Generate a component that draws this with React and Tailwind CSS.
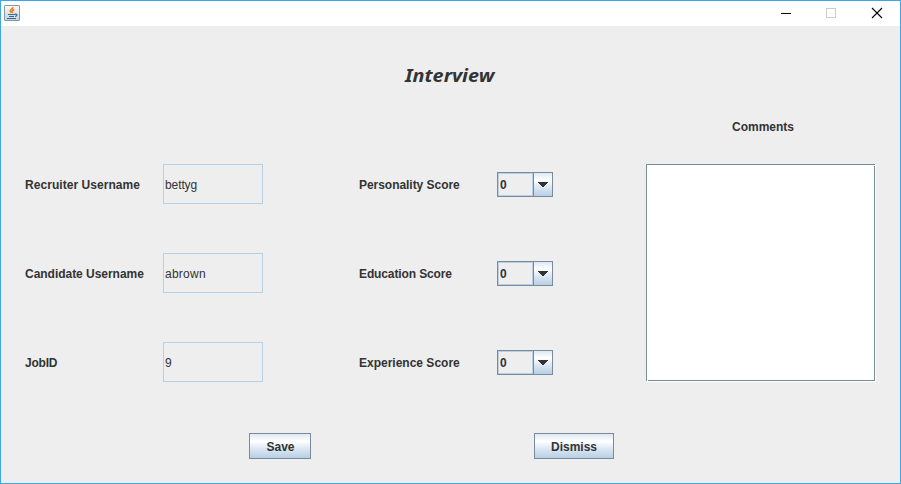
const metal =
  "border border-[#7a8a99] bg-[linear-gradient(to_bottom,#dde8f3_0%,#ffffff_30%,#dde8f3_60%,#b8cfe5_100%)]";

function JavaIcon() {
  return (
    <svg width="16" height="16" viewBox="0 0 16 16" className="block">
      <defs>
        <linearGradient id="tile" x1="0" y1="0" x2="0" y2="1">
          <stop offset="0" stopColor="#fbfcfd" />
          <stop offset="1" stopColor="#c3d0da" />
        </linearGradient>
      </defs>
      <rect x="0.5" y="0.5" width="15" height="15" rx="0.5" fill="url(#tile)" stroke="#8499a8" />
      <path d="M8.8 2.2C9.2 4 5.6 4.6 6.2 6.2L7.4 7.9M10.4 4.6C8 5.4 7.8 6.2 8.7 7.8" fill="none" stroke="#f07d1e" strokeWidth="1.6" />
      <path d="M4 9.5h7M5 11.5h5M3 13.5h9" fill="none" stroke="#356a96" strokeWidth="1" shapeRendering="crispEdges" />
      <path d="M10.8 9.3c2.8-.8 2.9 1.7.2 2.2" fill="none" stroke="#356a96" strokeWidth="1.2" />
    </svg>
  );
}

function TitleBar() {
  return (
    <div className="flex h-[25px] shrink-0 items-center bg-white pl-[3px]">
      <div className="mb-px">
        <JavaIcon />
      </div>
      <svg width="102" height="12" viewBox="0 0 102 12" shapeRendering="crispEdges" className="mr-[17px] mb-0.5 ml-auto block">
        <path d="M0 6.5h10" stroke="#000" />
        <path d="M45.5 1.5h9v9h-9z" fill="none" stroke="#ccc" />
        <path d="M91 1l10 10M101 1L91 11" stroke="#000" strokeWidth="1.1" shapeRendering="auto" />
      </svg>
    </div>
  );
}

function Field({ label, value, tracking = "", valueTracking = "" }) {
  return (
    <div className="flex h-10 items-center">
      <label className={`w-[138px] pt-0.5 font-bold whitespace-nowrap ${tracking}`}>{label}</label>
      <div className={`flex h-10 w-[100px] items-center border border-[#b8cfe5] pt-0.5 pl-px ${valueTracking}`}>{value}</div>
    </div>
  );
}

function Score({ label, tracking = "" }) {
  return (
    <div className="flex h-10 items-center font-bold">
      <label className={`w-[138px] pt-0.5 whitespace-nowrap ${tracking}`}>{label}</label>
      <div className="flex h-[25px] w-14">
        <div className="flex w-9 items-center border border-r-0 border-[#7a8a99]">
          <div className="flex h-full w-full items-center border border-[#b8cfe5] pt-0.5 pl-px">0</div>
        </div>
        <button className={`flex w-5 items-center justify-center ${metal}`}>
          <svg width="10" height="5" viewBox="0 0 10 5" shapeRendering="crispEdges">
            <path d="M0 0h10v1h-1v1h-1v1h-1v1h-1v1h-2v-1h-1v-1h-1v-1h-1v-1h-1z" fill="#333" />
          </svg>
        </button>
      </div>
    </div>
  );
}

function Comments() {
  return (
    <div className="flex w-[230px] flex-col">
      <h2 className="mt-[39px] mb-[29px] pl-1 text-center font-bold">Comments</h2>
      <div className="grid h-[218px] w-[230px]">
        <div className="col-start-1 row-start-1 mr-px mb-px border border-[#7a8a99] bg-white" />
        <div className="col-start-1 row-start-1 mt-px ml-px border-r border-b border-white" />
        <div className="col-start-1 row-start-1 mt-px mr-px size-px justify-self-end bg-white" />
        <div className="col-start-1 row-start-1 mb-px ml-px size-px self-end bg-white" />
      </div>
    </div>
  );
}

export default function App() {
  return (
    <div className="flex h-[484px] w-[901px] flex-col border border-[#3ca6e8] bg-[#eee] font-['Liberation_Sans',Arial,sans-serif] text-xs text-[#333]">
      <TitleBar />
      <main className="flex flex-1 flex-col pl-6">
        <h1 className="h-[54px] pt-9 pr-[25px] text-center font-['Noto_Sans',sans-serif] text-lg leading-[26px] font-bold italic">
          <span className="inline-block scale-x-110">Interview</span>
        </h1>
        <div className="flex">
          <div className="flex w-[334px] flex-col gap-[49px] pt-[84px]">
            <Field label="Recruiter Username" value="bettyg" tracking="tracking-[0.05px]" valueTracking="tracking-[-0.1px]" />
            <Field label="Candidate Username" value="abrown" tracking="tracking-[-0.03px]" valueTracking="tracking-[0.25px]" />
            <Field label="JobID" value="9" tracking="tracking-[-0.2px]" />
          </div>
          <div className="flex w-[287px] flex-col gap-[49px] pt-[84px]">
            <Score label="Personality Score" tracking="tracking-[-0.04px]" />
            <Score label="Education Score" tracking="tracking-[-0.12px]" />
            <Score label="Experience Score" />
          </div>
          <Comments />
        </div>
        <div className="mt-[51px] flex pl-56">
          <button className={`mr-[223px] h-[26px] w-[62px] pt-0.5 pl-px font-bold ${metal}`}>Save</button>
          <button className={`h-[26px] w-20 pt-0.5 font-bold ${metal}`}>Dismiss</button>
        </div>
      </main>
    </div>
  );
}
